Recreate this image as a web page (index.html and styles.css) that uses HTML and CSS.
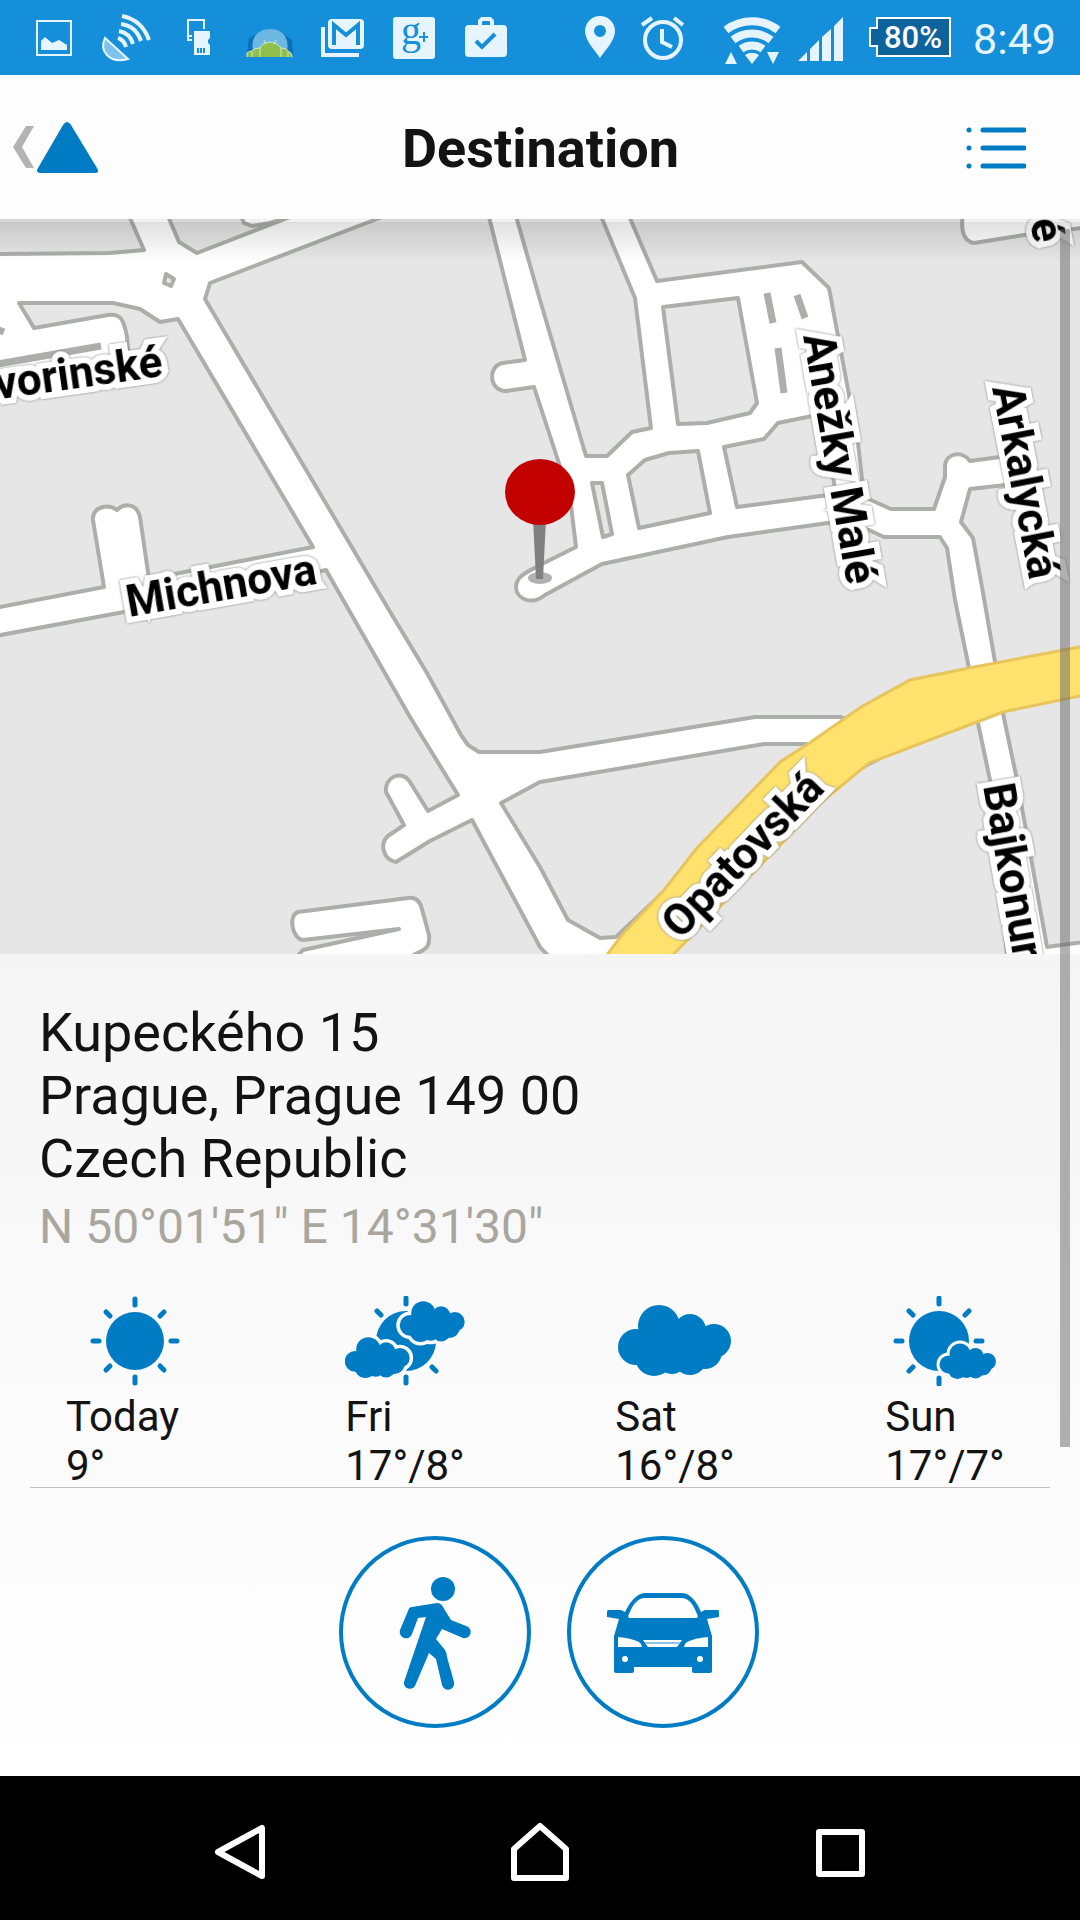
FILE: index.html
```html
<!DOCTYPE html>
<html lang="en">
<head>
    <meta charset="UTF-8">
    <meta name="viewport" content="width=device-width, initial-scale=1">
    <title>Destination</title>
    <link rel="stylesheet" href="styles.css">
</head>
<body>

    <div class="status-bar">
        <div class="status-left">
            <svg class="status-icon" width="48" height="48" viewBox="0 0 48 48">
                <rect class="line thin" x="7" y="7" width="34" height="34"/>
                <path d="M11 36V27L15 23L22 29L29 26L37 31V36Z"/>
            </svg>
            <svg class="status-icon" width="48" height="48" viewBox="0 0 48 48">
                <path class="dish" d="M3 24C-3 37 7 50 26 45Z"/>
                <path class="line" d="M20 2Q40 6 47 26M19 10Q34 12 39 27M17 17Q28 19 31 30M16 24Q22 26 24 33"/>
            </svg>
            <svg class="status-icon" width="48" height="48" viewBox="0 0 48 48">
                <path class="line thin" d="M18 26H14V6H30V15M14 22H18"/>
                <path d="M20 17H36V24L34 26V29L36 31V41H20Z"/>
                <path class="cut" d="M24 34V39M27 34V39M30 34V39"/>
            </svg>
            <svg class="status-icon" width="48" height="48" viewBox="0 0 48 48">
                <path class="city" d="M1 40L3 24L9 21L14 17H34L40 22L46 26L47 40Z"/>
                <path class="dome" d="M7 38C4 22 13 15 24 15S44 22 41 38Z"/>
                <path class="droid" d="M1 43V39Q3 37 6 37Q8 34 14 34Q16 29 24 28Q32 29 35 34Q40 34 42 37Q46 38 46 43Z"/>
                <path class="droid-line" d="M6 43V38M14 43V34M18 26L20 30M30 26L28 30M35 43V34M42 43V38M1 43V39Q3 37 6 37Q8 34 14 34Q16 29 24 28Q32 29 35 34Q40 34 42 37Q46 38 46 43"/>
            </svg>
            <svg class="status-icon" width="48" height="48" viewBox="0 0 48 48">
                <path class="line" d="M5 13V41H41"/>
                <rect x="10" y="5" width="36" height="30" rx="4"/>
                <path class="cut wide" d="M16 31V11L28 21L40 11V31"/>
            </svg>
            <svg class="status-icon" width="48" height="48" viewBox="0 0 48 48">
                <rect x="3" y="3" width="42" height="42" rx="3"/>
                <text class="g-plus" x="11" y="30">g</text>
                <path class="cut" d="M29 23H38M34 18V28"/>
            </svg>
            <svg class="status-icon" width="48" height="48" viewBox="0 0 48 48">
                <path class="line" d="M18 12V7L20 5H28L30 7V12"/>
                <rect x="3" y="11" width="42" height="32" rx="4"/>
                <path class="cut wide" d="M14 27L20 33L33 20"/>
            </svg>
        </div>

        <div class="status-right">
            <svg class="status-icon" width="44" height="48" viewBox="0 0 44 48">
                <path fill-rule="evenodd" d="M22 44C15 34 7 26 7 17A15 15 0 0 1 37 17C37 26 29 34 22 44ZM22 11A6 6 0 1 0 22 23A6 6 0 1 0 22 11Z"/>
            </svg>
            <svg class="status-icon" width="44" height="48" viewBox="0 0 44 48">
                <circle class="line" cx="23" cy="26" r="18"/>
                <path class="line" d="M22 15V28L32 33M2 11L12 4M34 4L43 11"/>
            </svg>
            <svg class="status-icon" width="80" height="48" viewBox="0 0 80 48">
                <path class="line band" d="M24 16A43 43 0 0 1 76 16M31 26A31 31 0 0 1 69 26M39 35A19 19 0 0 1 61 35"/>
                <path d="M50 50L43 41A12 12 0 0 1 57 41ZM23 50L29 38L35 50ZM65 38H77L71 50Z"/>
            </svg>
            <svg class="status-icon" width="44" height="48" viewBox="0 0 44 48">
                <path d="M-2 47H7V38ZM10 47H19V26L10 35ZM22 47H31V15L22 23ZM34 47H43V3L34 12Z"/>
            </svg>
            <svg class="status-icon" width="90" height="48" viewBox="0 0 90 48">
                <path class="battery" d="M15 4H88V42H15V32H8V14H15Z"/>
                <text class="battery-text" x="51" y="34">80%</text>
            </svg>
            <span class="clock">8:49</span>
        </div>
    </div>

    <header class="header">
        <button class="back-btn" aria-label="Back">
            <svg width="86" height="52" viewBox="0 0 86 52">
                <path class="chevron" d="M13 4H21L9 25L21 46H13L0 25Z"/>
                <path class="logo" d="M50 3Q54 -3 58 3L84 46Q87 51 82 51H28Q22 51 25 46Z"/>
            </svg>
        </button>
        <h1>Destination</h1>
        <button class="menu-btn" aria-label="Menu">
            <svg width="60" height="42" viewBox="0 0 60 42">
                <path class="list" d="M17 3H58M17 21H58M17 39H58M3 3H3M3 21H3M3 39H3"/>
            </svg>
        </button>
    </header>

    <main class="content">
        <div class="map">
            <svg viewBox="0 0 1080 735">
                <!-- blocks, the roads are what is left between them -->
                <g class="blocks">
                    <path d="M-10 -10H126L144 31L110 34L-10 35Z"/>
                    <path d="M165 -10L179 23L197 34L290 -2L270 4L252 7L244 4L238 -10Z"/>
                    <path d="M400 -10L377 0L210 64L205 80L389 391L427 454L461 516L468 526L479 533H540L755 498H840L900 520L975 470L969 449L955 381L947 329L940 318H884L869 311L828 304L728 318L602 345L545 376C532 387 516 380 516 368C516 356 530 352 540 346L576 328L570 278L534 168L506 172C488 172 488 146 503 144L525 141L487 -10Z"/>
                    <path d="M514 -10L540 81L586 237H607L632 213L651 209L635 79L598 -10Z"/>
                    <path d="M626 -10L657 62L802 43L829 69L858 224L864 278L891 290H934L945 258V248C945 234 962 231 970 242L1000 238L1015 250L1005 266L970 270L961 303L973 319L982 368L998 460H1090V8L1024 16L974 24C962 22 960 8 964 -10Z"/>
                    <path d="M663 88L738 79L757 184L750 194L707 204L678 205Z"/>
                    <path d="M628 256L645 241L669 234L698 232L710 294L639 309Z"/>
                    <path d="M592 264H602L612 315L603 318Z"/>
                    <path d="M724 228L764 220L778 204L822 195L836 275L737 288Z"/>
                    <path d="M19 84H113L140 90L160 103L178 100L313 328L149 360L140 298C137 284 124 284 117 291C108 284 92 288 93 301L104 368L-10 390V175L130 152L127 118C124 100 120 94 108 96L34 109Z"/>
                    <path d="M-10 418L124 393L326 351L410 498L458 576L428 592L410 563C402 550 384 558 386 573L404 606L388 617C380 624 382 640 396 643L430 622L472 601L540 728L556 745H-10Z"/>
                    <path d="M501 584L540 563L764 525H820L616 718L600 719L568 701L540 648Z"/>
                    <path d="M640 745L840 560L975 490L990 561L1008 745Z"/>
                    <path d="M1000 480L1017 561L1047 728L1090 722V460Z"/>
                </g>
                <g class="strips">
                    <path d="M767 74L773 104M778 129L784 174M797 76L805 99M-2 145L101 127M-4 110L4 113"/>
                </g>
                <path class="inset" d="M298 693L408 679C416 678 420 682 422 690L429 716C430 726 428 730 415 735L405 745H290L303 731L399 710L303 721C292 720 288 696 298 693Z"/>
                <path class="island" d="M166 55L174 60L171 67L164 64Z"/>
                <path class="main-road" d="M600 745L622 716L664 671L697 629L780 543L811 523L861 488L910 461L969 449L1090 426V475L1003 493L977 503L869 544L824 581L664 745Z"/>

                <g class="labels">
                    <text transform="translate(164 157) rotate(-8)" text-anchor="end">vorinské</text>
                    <text transform="translate(129 398) rotate(-10)">Michnova</text>
                    <text transform="translate(803 117) rotate(80)">Anežky Malé</text>
                    <text transform="translate(992 169) rotate(79)">Arkalycká</text>
                    <text transform="translate(826 571) rotate(-46)" text-anchor="end">Opatovská</text>
                    <text transform="translate(983 567) rotate(80)">Bajkonur</text>
                    <text transform="translate(1034 25) rotate(80)" text-anchor="end">é</text>
                </g>

                <!-- pin -->
                <ellipse class="pin-shadow" cx="540" cy="359" rx="12" ry="6"/>
                <path class="pin-stem" d="M533 300H546L543 360H536Z"/>
                <ellipse class="pin-head" cx="540" cy="273" rx="35" ry="33"/>
            </svg>
        </div>

        <section class="address">
            <p>Kupeckého 15<br>Prague, Prague 149 00<br>Czech Republic</p>
            <p class="coords">N 50°01'51" E 14°31'30"</p>
        </section>

        <section class="weather">
            <div class="day">
                <svg width="120" height="90" viewBox="0 0 120 90">
                    <circle cx="60" cy="45" r="29"/>
                    <path class="rays" d="M60 3V9M60 81V87M18 45H24M96 45H102M31 16L35 20M89 16L85 20M31 74L35 70M89 74L85 70"/>
                </svg>
                <p class="day-text">Today<br>9°</p>
            </div>
            <div class="day">
                <svg width="120" height="90" viewBox="0 0 120 90">
                    <defs>
                        <g id="cloud">
                            <circle cx="21" cy="51" r="18"/>
                            <circle cx="44" cy="30" r="21"/>
                            <circle cx="75" cy="34" r="16"/>
                            <circle cx="99" cy="45" r="17"/>
                            <circle cx="39" cy="61" r="19"/>
                            <circle cx="57" cy="64" r="14"/>
                            <circle cx="75" cy="62" r="17"/>
                            <circle cx="90" cy="56" r="17"/>
                            <rect x="30" y="32" width="62" height="36"/>
                        </g>
                    </defs>
                    <circle cx="61" cy="45" r="30"/>
                    <path class="rays" d="M61 2V8M61 81V87M32 15L36 19M87 71L91 75"/>
                    <use class="cloud-gap" href="#cloud" transform="translate(53 0) scale(.575)"/>
                    <use class="cloud-gap" href="#cloud" transform="translate(-2 36) scale(.575)"/>
                    <use href="#cloud" transform="translate(53 0) scale(.575)"/>
                    <use href="#cloud" transform="translate(-2 36) scale(.575)"/>
                </svg>
                <p class="day-text">Fri<br>17°/8°</p>
            </div>
            <div class="day">
                <svg width="120" height="90" viewBox="0 0 120 90">
                    <use href="#cloud"/>
                </svg>
                <p class="day-text">Sat<br>16°/8°</p>
            </div>
            <div class="day">
                <svg width="120" height="90" viewBox="0 0 120 90">
                    <circle cx="54" cy="45" r="30"/>
                    <path class="rays" d="M54 2V8M54 82V88M11 45H17M91 45H97M24 15L28 19M84 15L80 19M24 75L28 71"/>
                    <use class="cloud-gap" href="#cloud" transform="translate(53 43) scale(.5)"/>
                    <use href="#cloud" transform="translate(53 43) scale(.5)"/>
                </svg>
                <p class="day-text">Sun<br>17°/7°</p>
            </div>
        </section>
        <hr class="divider">

        <div class="travel">
            <button class="travel-btn" aria-label="Walk">
                <svg width="184" height="184" viewBox="0 0 184 184">
                    <circle cx="100" cy="49" r="12"/>
                    <path d="M69 67L94 63Q98 63 100 67L108 80L123 86A6 6 0 0 1 120 98L99 89L93 99L102 110Q104 113 104 117L111 142A6 6 0 0 1 99 145L93 119L86 113L72 146A6 6 0 0 1 61 142L83 77L75 78L69 94A6 6 0 0 1 57 90L65 71Q66 67 69 67Z"/>
                </svg>
            </button>
            <button class="travel-btn" aria-label="Drive">
                <svg width="184" height="184" viewBox="0 0 184 184">
                    <path d="M37 70H50L54 72C59 62 66 53 74 53H111C119 53 126 62 130 72L134 70H147Q148 70 148 72V77L136 79L141 96V131Q141 133 139 133H123Q121 133 121 131V127H63V131Q63 133 61 133H45Q43 133 43 131V96L48 79L36 77V72Q36 70 37 70Z"/>
                    <path class="glass" d="M59 78Q56 78 58 74C62 64 67 58 74 58H110C118 58 122 64 126 74Q128 78 125 78ZM47 97Q60 98 68 102Q71 104 71 107H47ZM137 97Q124 98 116 102Q113 104 113 107H137ZM72 100H111L106 107H77Z"/>
                    <path class="grill" d="M74 103H109"/>
                    <circle class="glass" cx="54" cy="119" r="3"/>
                    <circle class="glass" cx="129" cy="119" r="3"/>
                </svg>
            </button>
        </div>

        <div class="scrollbar"></div>
    </main>

    <nav class="nav-bar">
        <button aria-label="Back">
            <svg width="60" height="60" viewBox="0 0 60 60"><path d="M52 6V54L8 30Z"/></svg>
        </button>
        <button aria-label="Home">
            <svg width="60" height="60" viewBox="0 0 60 60"><path d="M4 56V27L30 4L56 27V56Z"/></svg>
        </button>
        <button aria-label="Recent apps">
            <svg width="60" height="60" viewBox="0 0 60 60"><path d="M9 10H52V52H9Z"/></svg>
        </button>
    </nav>

</body>
</html>
```
FILE: styles.css
```css
* {
    box-sizing: border-box;
}

body {
    margin: 0;
    min-height: 100vh;
    display: flex;
    flex-direction: column;
    font-family: Roboto, 'Liberation Sans', sans-serif;
    color: #131313;
    background: #fff;
}

h1, p {
    margin: 0;
}

button {
    display: flex;
    padding: 0;
    border: none;
    background: none;
    cursor: pointer;
}

svg {
    display: block;
}

/* status bar */
.status-bar {
    height: 75px;
    padding: 0 24px 0 30px;
    display: flex;
    justify-content: space-between;
    align-items: center;
    background: #158fda;
    color: #e5f4fd;
}

.status-left, .status-right {
    display: flex;
    align-items: center;
    gap: 24px;
}

.status-right {
    gap: 18px;
}

.status-icon {
    overflow: visible;
    fill: #e5f4fd;
}

.line {
    fill: none;
    stroke: #e5f4fd;
    stroke-width: 4;
}

.thin {
    stroke-width: 2;
}

.band {
    stroke-width: 8;
}

.cut {
    fill: none;
    stroke: #158fda;
    stroke-width: 2;
}

.wide {
    stroke-width: 4;
}

.dish {
    fill: #7fc1ec;
    stroke: #e5f4fd;
    stroke-width: 2;
}

.city {
    fill: #0b6fba;
}

.dome {
    fill: #6db8e2;
}

.droid {
    fill: #8fbf4d;
}

.droid-line {
    fill: none;
    stroke: #d5e8bd;
    stroke-width: 1;
}

.g-plus {
    font-family: 'Liberation Serif', serif;
    font-size: 40px;
    fill: #158fda;
}

.battery {
    fill: #0f639d;
    stroke: #fff;
    stroke-width: 2;
}

.battery-text {
    font-size: 31px;
    font-weight: 500;
    text-anchor: middle;
    fill: #fff;
}

.clock {
    padding-left: 3px;
    font-size: 43px;
    line-height: 48px;
    padding-top: 2px;
}

/* header */
.header {
    height: 144px;
    padding: 2px 54px 0 13px;
    display: grid;
    grid-template-columns: 1fr auto 1fr;
    align-items: center;
    background: #fdfdfd;
}

.header h1 {
    padding: 2px 0 0 42px;
    font-size: 54px;
    line-height: 64px;
}

.menu-btn {
    justify-self: end;
}

.chevron {
    fill: #b3b3b3;
}

.logo {
    fill: #007cc5;
}

.list {
    fill: none;
    stroke: #007cc5;
    stroke-width: 5;
    stroke-linecap: round;
}

/* content */
.content {
    position: relative;
    flex: 1;
    display: flex;
    flex-direction: column;
    background: linear-gradient(#f5f5f5 47%, #fff);
}

.scrollbar {
    position: absolute;
    top: 10px;
    right: 10px;
    bottom: 329px;
    width: 10px;
    background: rgba(100, 100, 100, 0.5);
}

.map {
    position: relative;
    background: #fff;
}

.map svg {
    width: 100%;
    height: auto;
}

.map::after {
    content: '';
    position: absolute;
    inset: 0 0 auto;
    height: 40px;
    border-top: 3px solid rgba(0, 0, 0, 0.06);
    background: linear-gradient(rgba(0, 0, 0, 0.12), transparent);
}

.blocks, .inset, .island {
    fill: #e6e6e6;
    stroke: #acaeab;
    stroke-width: 4;
    stroke-linejoin: round;
}

.inset {
    fill: #fff;
}

.strips {
    stroke: #acaeab;
    stroke-width: 7;
}

.main-road {
    fill: #fee26d;
    stroke: #e7c45c;
    stroke-width: 3;
}

.labels {
    font-size: 44px;
    font-weight: 700;
    fill: #000;
    stroke: #fff;
    stroke-width: 12;
    paint-order: stroke;
    filter: drop-shadow(0 0 1px #777);
}

.pin-shadow {
    fill: #b0b0b0;
}

.pin-stem {
    fill: #808080;
}

.pin-head {
    fill: #c20000;
}

/* address */
.address {
    padding: 47px 39px 0;
    font-size: 54px;
    line-height: 63px;
}

.coords {
    margin-top: 9px;
    font-size: 48px;
    line-height: 56px;
    color: #a9a79d;
}

/* weather */
.weather {
    padding-top: 41px;
    display: grid;
    grid-template-columns: repeat(4, 1fr);
}

.weather svg {
    fill: #007cc5;
}

.rays {
    stroke: #007cc5;
    stroke-width: 5;
    stroke-linecap: round;
}

.cloud-gap {
    stroke: #fafafa;
    stroke-width: 12;
}

.day {
    display: flex;
    flex-direction: column;
    align-items: center;
}

.day-text {
    margin: 6px 0 -3px;
    font-size: 42px;
    line-height: 49px;
}

.day:first-child .day-text {
    min-width: 138px;
}

.divider {
    width: auto;
    margin: 0 30px;
    border: none;
    border-top: 1px solid #c0c0c0;
}

/* walk / drive */
.travel {
    display: flex;
    justify-content: center;
    gap: 36px;
    padding: 48px 0 47px 18px;
}

.travel-btn {
    border: 4px solid #007cc5;
    border-radius: 50%;
    background: #fdfdfd;
    fill: #007cc5;
}

.glass {
    fill: #fdfdfd;
}

.grill {
    stroke: #8cc4e6;
    stroke-width: 2;
}

/* navigation bar */
.nav-bar {
    height: 144px;
    padding: 8px 90px 0;
    display: grid;
    grid-template-columns: repeat(3, 1fr);
    place-items: center;
    background: #000;
}

.nav-bar svg {
    fill: none;
    stroke: #fff;
    stroke-width: 6;
    stroke-linejoin: round;
}
```
